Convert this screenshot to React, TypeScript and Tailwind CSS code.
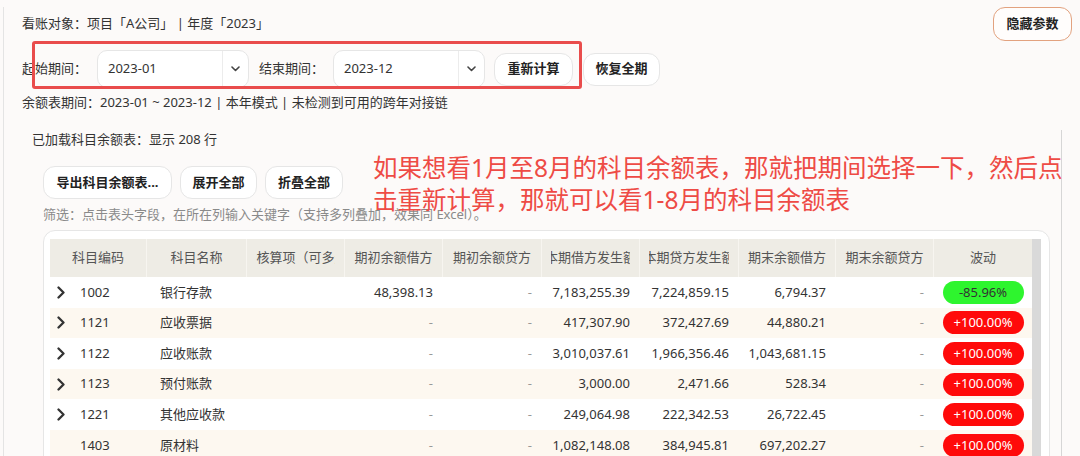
import React from "react";

const cols = [
  { w: "w-[97px]", label: "科目编码" },
  { w: "w-[100px]", label: "科目名称" },
  { w: "w-[98px]", label: "辅助核算项（可多选）" },
  { w: "w-[98px]", label: "期初余额借方" },
  { w: "w-[99px]", label: "期初余额贷方" },
  { w: "w-[98px]", label: "本期借方发生额" },
  { w: "w-[99px]", label: "本期贷方发生额" },
  { w: "w-[97px]", label: "期末余额借方" },
  { w: "w-[98px]", label: "期末余额贷方" },
  { w: "w-[98px]", label: "波动" },
];

const rows = [
  { code: "1002", name: "银行存款", vals: ["48,398.13", "-", "7,183,255.39", "7,224,859.15", "6,794.37", "-"], pct: "-85.96%", up: false, kids: true },
  { code: "1121", name: "应收票据", vals: ["-", "-", "417,307.90", "372,427.69", "44,880.21", "-"], pct: "+100.00%", up: true, kids: true },
  { code: "1122", name: "应收账款", vals: ["-", "-", "3,010,037.61", "1,966,356.46", "1,043,681.15", "-"], pct: "+100.00%", up: true, kids: true },
  { code: "1123", name: "预付账款", vals: ["-", "-", "3,000.00", "2,471.66", "528.34", "-"], pct: "+100.00%", up: true, kids: true },
  { code: "1221", name: "其他应收款", vals: ["-", "-", "249,064.98", "222,342.53", "26,722.45", "-"], pct: "+100.00%", up: true, kids: true },
  { code: "1403", name: "原材料", vals: ["-", "-", "1,082,148.08", "384,945.81", "697,202.27", "-"], pct: "+100.00%", up: true, kids: false },
];

function Chevron() {
  return (
    <svg width="8" height="13" viewBox="0 0 8 13" fill="none">
      <path d="M1.5 1.5 L6.5 6.5 L1.5 11.5" stroke="#333" strokeWidth="2.3" strokeLinecap="round" strokeLinejoin="round" />
    </svg>
  );
}

function PeriodSelect({ value }: { value: string }) {
  return (
    <div className="flex h-[38px] w-[152px] items-center rounded-[10px] border border-[#e6e6e6] bg-white">
      <span className="flex-1 pl-[10px] text-[13px] text-[#333]">{value}</span>
      <div className="flex h-full w-[26px] items-center justify-center border-l border-[#ececec]">
        <svg width="9" height="6" viewBox="0 0 9 6" fill="none">
          <path d="M1 1 L4.5 4.5 L8 1" stroke="#444" strokeWidth="1.6" strokeLinecap="round" strokeLinejoin="round" />
        </svg>
      </div>
    </div>
  );
}

function Btn({ children, w }: { children: React.ReactNode; w: string }) {
  return (
    <button className={`${w} flex h-[33px] items-center justify-center rounded-[12px] border border-[#e6e6e6] bg-white text-[13px] font-bold text-[#222]`}>
      {children}
    </button>
  );
}

export default function App() {
  return (
    <div className="relative h-[456px] w-[1080px] overflow-hidden bg-[#fcfaf9] font-['Noto_Sans','Noto_Sans_CJK_SC',sans-serif] text-[13px] text-[#333]">
      <div className="ml-[3px] h-full border-l border-[#e4e4e4]">
        {/* 参数区 */}
        <div className="pl-[18px]">
          <div className="mt-[7px] flex h-[34px] items-center justify-between pr-[8px]">
            <span>看账对象：项目「A公司」 | 年度「2023」</span>
            <button className="flex h-[34px] w-[79px] items-center justify-center rounded-[12px] border border-[#e2a27f] bg-[#fffdfc] text-[13px] font-bold text-[#222]">
              隐藏参数
            </button>
          </div>
          <div className="mt-[9px] flex h-[38px] items-center">
            <span className="w-[75px]">起始期间：</span>
            <PeriodSelect value="2023-01" />
            <span className="ml-[10px] w-[74px]">结束期间：</span>
            <PeriodSelect value="2023-12" />
            <div className="ml-[9px]">
              <Btn w="w-[79px]">重新计算</Btn>
            </div>
            <div className="ml-[10px]">
              <Btn w="w-[77px]">恢复全期</Btn>
            </div>
          </div>
          <div className="mt-[5px] flex h-[20px] items-center">
            余额表期间：2023-01 ~ 2023-12 | 本年模式 | 未检测到可用的跨年对接链
          </div>
        </div>

        {/* 余额表 */}
        <div className="mt-[17px] h-full w-[1058px] border-r border-[#d6d6d6] pl-[28px]">
          <div className="flex h-[20px] items-center">已加载科目余额表：显示 208 行</div>
          <div className="pl-[11px]">
            <div className="mt-[16px] flex gap-[8px]">
              <Btn w="w-[129px]">导出科目余额表...</Btn>
              <Btn w="w-[77px]">展开全部</Btn>
              <Btn w="w-[78px]">折叠全部</Btn>
            </div>
            <div className="mt-[6px] flex h-[20px] items-center text-[#8a8a8a]">
              筛选：点击表头字段，在所在列输入关键字（支持多列叠加，效果同 Excel）。
            </div>
            <div className="mt-[5px] flex w-[1007px] rounded-[12px] border border-[#e6e6e6] bg-white pl-[6px] pr-[8px] pt-[8px]">
              <div className="w-[982px]">
                <div className="flex h-[38px] bg-[#eeece5] text-[#555]">
                  {cols.map((c, i) => (
                    <div
                      key={c.label}
                      className={`${c.w} flex h-full items-center px-[9px] ${i < cols.length - 1 ? "border-r border-[#f7f5f0]" : ""}`}
                    >
                      <div className="flex w-full justify-center overflow-hidden whitespace-nowrap">
                        <span className="shrink-0">{c.label}</span>
                      </div>
                    </div>
                  ))}
                </div>
                {rows.map((r, ri) => (
                  <div key={r.code} className={`flex h-[30.6px] items-center ${ri % 2 === 1 ? "bg-[#fdf8f0]" : "bg-white"}`}>
                    <div className="flex w-[97px] items-center pl-[7px]">
                      <span className="flex w-[23px] items-center">{r.kids ? <Chevron /> : null}</span>
                      <span>{r.code}</span>
                    </div>
                    <div className="w-[100px] pl-[13px]">{r.name}</div>
                    <div className="w-[98px]" />
                    {r.vals.map((v, vi) => (
                      <div
                        key={vi}
                        className={`${cols[vi + 3].w} pr-[10px] text-right ${v === "-" ? "text-[#999]" : "text-[#333]"}`}
                      >
                        {v}
                      </div>
                    ))}
                    <div className="flex w-[98px] justify-center">
                      <span
                        className={`flex h-[23px] w-[81px] items-center justify-center rounded-full ${r.up ? "bg-[#ff0a0a] text-white" : "bg-[#2ef52e] text-[#333]"}`}
                      >
                        {r.pct}
                      </span>
                    </div>
                  </div>
                ))}
              </div>
              <div className="h-[300px] w-[9px] bg-[#d9d9d9]" />
            </div>
          </div>
        </div>
      </div>

      {/* 标注 */}
      <div className="pointer-events-none absolute left-[32px] top-[41px] h-[48px] w-[550px] rounded-[3px] border-[3px] border-[#e94c4c]" />
      <div className="pointer-events-none absolute left-[373px] top-[152px] text-[24.5px] leading-[32px] text-[#ee4b45]">
        如果想看1月至8月的科目余额表，那就把期间选择一下，然后点
        <br />
        击重新计算，那就可以看1-8月的科目余额表
      </div>
    </div>
  );
}
